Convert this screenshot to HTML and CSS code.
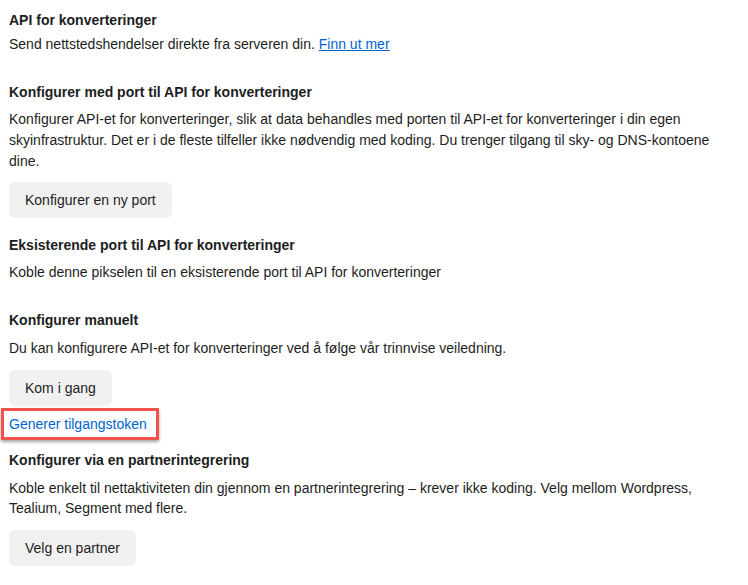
FILE: index.html
```html
<!DOCTYPE html>
<html>
<head>
  <title>API for konverteringer</title>
  <link rel="stylesheet" href="styles.css">
</head>
<body>

  <div class="section intro">
    <h3>API for konverteringer</h3>
    <p>Send nettstedshendelser direkte fra serveren din. <a href="#">Finn ut mer</a></p>
  </div>

  <div class="section gateway">
    <h3>Konfigurer med port til API for konverteringer</h3>
    <p>Konfigurer API-et for konverteringer, slik at data behandles med porten til API-et for konverteringer i din egen skyinfrastruktur. Det er i de fleste tilfeller ikke nødvendig med koding. Du trenger tilgang til sky- og DNS-kontoene dine.</p>
    <button>Konfigurer en ny port</button>
  </div>

  <div class="section existing">
    <h3>Eksisterende port til API for konverteringer</h3>
    <p>Koble denne pikselen til en eksisterende port til API for konverteringer</p>
  </div>

  <div class="section manual">
    <h3>Konfigurer manuelt</h3>
    <p>Du kan konfigurere API-et for konverteringer ved å følge vår trinnvise veiledning.</p>
    <button>Kom i gang</button>
    <div class="highlight">
      <a href="#" class="token">Generer tilgangstoken</a>
    </div>
  </div>

  <div class="section partner">
    <h3>Konfigurer via en partnerintegrering</h3>
    <p>Koble enkelt til nettaktiviteten din gjennom en partnerintegrering – krever ikke koding. Velg mellom Wordpress, Tealium, Segment med flere.</p>
    <button>Velg en partner</button>
  </div>

</body>
</html>
```

FILE: styles.css
```css
body {
  margin: 0;
  padding: 10px 30px 0 9px;
  font-family: "Liberation Sans", Arial, sans-serif;
  font-size: 14px;
  color: #1c1e21;
  background: #fff;
}
h3 { margin: 0; font-size: 14px; line-height: 20px; font-weight: bold; }
p { margin: 0; line-height: 20px; }
a { color: #0064d1; }

button {
  display: block;
  border: none;
  border-radius: 6px;
  background: #f1f1f1;
  color: #1c1e21;
  font-family: "Liberation Sans", Arial, sans-serif;
  font-size: 14px;
  height: 36px;
  padding: 0 16px;
  cursor: pointer;
}

.intro p { margin-top: 4px; }

.gateway { margin-top: 28px; }
.gateway p { margin-top: 7px; line-height: 21px; }
.gateway button { margin-top: 10px; }

.existing { margin-top: 17px; }
.existing p { margin-top: 7px; }

.manual { margin-top: 28px; }
.manual p { margin-top: 8px; }
.manual button { margin-top: 12px; }

.highlight {
  margin: 2px 0 0 -8px;
  width: 147px;
  height: 26px;
  border: 3px solid #f0524a;
  box-shadow: 0 2px 3px rgba(0, 0, 0, 0.35);
  padding-left: 5px;
  display: flex;
  align-items: center;
}
.token { text-decoration: none; }

.partner { margin-top: 10px; }
.partner p { margin-top: 8px; }
.partner button { margin-top: 12px; }
```
